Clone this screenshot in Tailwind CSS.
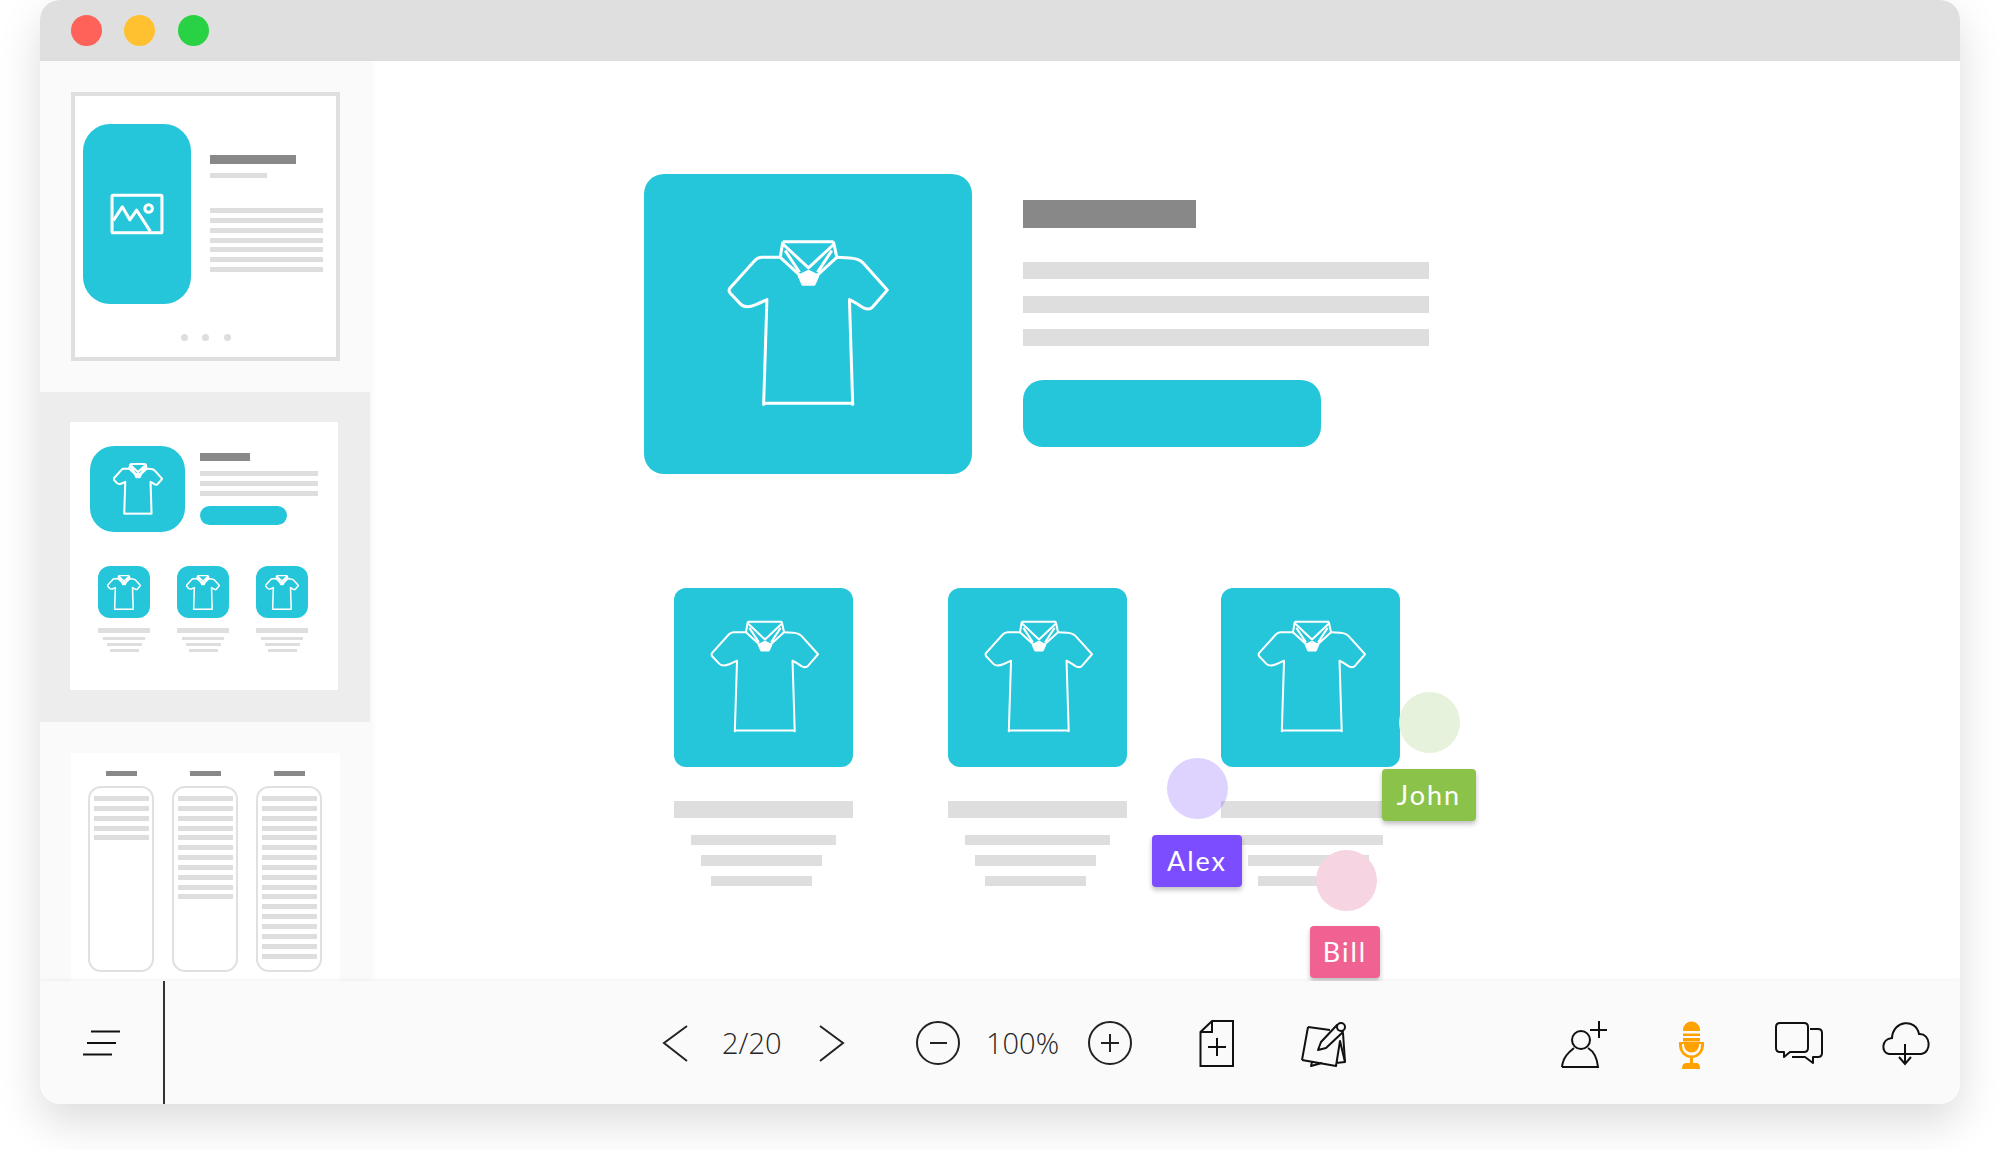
<!DOCTYPE html>
<html lang="en">

<head>
    <meta charset="UTF-8">
    <title>Slides</title>
    <script src="https://cdn.jsdelivr.net/npm/@tailwindcss/browser@4"></script>
</head>

<body class="bg-white w-[2000px] h-[1150px] overflow-hidden pl-[40px]">
    <svg class="hidden">
        <symbol id="shirt" viewBox="290 235 490 505">
            <g fill="none" stroke="white" stroke-linejoin="round">
                <path d="M450 290H395Q382 290 373 300L299 382Q293 390 300 398L330 430Q345 445 375 433Q395 425 410 417L400 736" />
                <path d="M620 290L660 292Q688 294 700 308L772 388L727 440Q718 450 700 442Q675 425 658 417L668 736" />
                <path d="M400 729H668" />
                <path d="M458 243H610M458 243L450 290L510 345M610 243L620 290L560 345M458 250L535 322L612 250M465 270L508 335M605 270L562 335" />
                <path d="M507 346L535 332L563 346L552 371H518Z" fill="white" />
            </g>
        </symbol>
    </svg>

    <div class="w-[1920px] h-[1104px] rounded-[20px] overflow-hidden flex flex-col bg-white shadow-[0_18px_44px_rgba(0,0,0,0.14)]">
        <!-- title bar -->
        <div class="h-[61px] bg-[#dfdfdf] flex items-center gap-[22.8px] pl-[30.7px]">
            <div class="w-[31px] h-[31px] rounded-full bg-[#ff6259]"></div>
            <div class="w-[31px] h-[31px] rounded-full bg-[#ffc130]"></div>
            <div class="w-[31px] h-[31px] rounded-full bg-[#29d244]"></div>
        </div>

        <div class="h-[920px] flex">
            <!-- slide list -->
            <div class="w-[330px] flex flex-col shadow-[2px_0_6px_rgba(0,0,0,0.04)] z-10">
                <div class="h-[331px] bg-[#fafafa] pl-[31px] pt-[31px]">
                    <div class="w-[269px] h-[269px] border-4 border-[#dfdfdf] bg-white pl-[8px] pt-[28px] flex flex-col">
                        <div class="flex gap-[19px]">
                            <div class="w-[108px] h-[180px] rounded-[27px] bg-[#26c6da] flex items-center justify-center">
                                <svg class="w-[54px] h-[42px]" viewBox="332 580 158 122" fill="none" stroke="white" stroke-width="9" stroke-linejoin="round">
                                    <rect x="338" y="586" width="146" height="110" rx="3" />
                                    <path d="M342 660L368 620L390 658L410 630L450 692" />
                                    <circle cx="445" cy="625" r="11" />
                                </svg>
                            </div>
                            <div class="flex flex-col pt-[31px]">
                                <div class="w-[86px] h-[9px] bg-[#888888]"></div>
                                <div class="w-[57px] h-[5px] bg-[#dedede] mt-[9px]"></div>
                                <div class="flex flex-col gap-[4.85px] mt-[30px]">
                                    <div class="w-[113px] h-[5px] bg-[#dedede]"></div>
                                    <div class="w-[113px] h-[5px] bg-[#dedede]"></div>
                                    <div class="w-[113px] h-[5px] bg-[#dedede]"></div>
                                    <div class="w-[113px] h-[5px] bg-[#dedede]"></div>
                                    <div class="w-[113px] h-[5px] bg-[#dedede]"></div>
                                    <div class="w-[113px] h-[5px] bg-[#dedede]"></div>
                                    <div class="w-[113px] h-[5px] bg-[#dedede]"></div>
                                </div>
                            </div>
                        </div>
                        <div class="flex justify-center gap-[14.5px] mt-[30px] -ml-[8px]">
                            <div class="w-[7px] h-[7px] rounded-full bg-[#dedede]"></div>
                            <div class="w-[7px] h-[7px] rounded-full bg-[#dedede]"></div>
                            <div class="w-[7px] h-[7px] rounded-full bg-[#dedede]"></div>
                        </div>
                    </div>
                </div>

                <div class="h-[330px] bg-[#ededed] pl-[30px] pt-[30px]">
                    <div class="w-[268px] h-[268px] bg-white pl-[20px] pt-[24px]">
                        <div class="flex gap-[15px]">
                            <div class="w-[95px] h-[86px] rounded-[24px] bg-[#26c6da] flex items-center justify-center">
                                <svg class="w-[50px] h-[52px]" stroke-width="20"><use href="#shirt" /></svg>
                            </div>
                            <div class="flex flex-col pt-[7px]">
                                <div class="w-[50px] h-[8px] bg-[#888888]"></div>
                                <div class="flex flex-col gap-[4.75px] mt-[10px]">
                                    <div class="w-[118px] h-[5px] bg-[#dedede]"></div>
                                    <div class="w-[118px] h-[5px] bg-[#dedede]"></div>
                                    <div class="w-[118px] h-[5px] bg-[#dedede]"></div>
                                </div>
                                <div class="w-[87px] h-[19px] rounded-[10px] bg-[#26c6da] mt-[10px]"></div>
                            </div>
                        </div>
                        <div class="flex gap-[27px] mt-[34px] ml-[8px]">
                            <div class="flex flex-col items-center w-[52px]">
                                <div class="w-[52px] h-[52px] rounded-[12px] bg-[#26c6da] flex items-center justify-center">
                                    <svg class="w-[34px] h-[35px]" stroke-width="22"><use href="#shirt" /></svg>
                                </div>
                                <div class="w-[52px] h-[5px] bg-[#dedede] mt-[10px]"></div>
                                <div class="w-[42px] h-[3px] bg-[#dedede] mt-[4px]"></div>
                                <div class="w-[35px] h-[3px] bg-[#dedede] mt-[3px]"></div>
                                <div class="w-[29px] h-[3px] bg-[#dedede] mt-[3px]"></div>
                            </div>
                            <div class="flex flex-col items-center w-[52px]">
                                <div class="w-[52px] h-[52px] rounded-[12px] bg-[#26c6da] flex items-center justify-center">
                                    <svg class="w-[34px] h-[35px]" stroke-width="22"><use href="#shirt" /></svg>
                                </div>
                                <div class="w-[52px] h-[5px] bg-[#dedede] mt-[10px]"></div>
                                <div class="w-[42px] h-[3px] bg-[#dedede] mt-[4px]"></div>
                                <div class="w-[35px] h-[3px] bg-[#dedede] mt-[3px]"></div>
                                <div class="w-[29px] h-[3px] bg-[#dedede] mt-[3px]"></div>
                            </div>
                            <div class="flex flex-col items-center w-[52px]">
                                <div class="w-[52px] h-[52px] rounded-[12px] bg-[#26c6da] flex items-center justify-center">
                                    <svg class="w-[34px] h-[35px]" stroke-width="22"><use href="#shirt" /></svg>
                                </div>
                                <div class="w-[52px] h-[5px] bg-[#dedede] mt-[10px]"></div>
                                <div class="w-[42px] h-[3px] bg-[#dedede] mt-[4px]"></div>
                                <div class="w-[35px] h-[3px] bg-[#dedede] mt-[3px]"></div>
                                <div class="w-[29px] h-[3px] bg-[#dedede] mt-[3px]"></div>
                            </div>
                        </div>
                    </div>
                </div>

                <div class="flex-1 bg-[#fafafa] pl-[31px] pt-[31px] flex">
                    <div class="w-[269px] bg-white pl-[17px] pt-[18px] flex gap-[18px]">
                        <div class="flex flex-col items-center">
                            <div class="w-[31px] h-[5px] bg-[#888888]"></div>
                            <div class="w-[66px] h-[186px] mt-[10px] border-2 border-[#e0e0e0] rounded-[13px] pl-[4px] pt-[8px] flex flex-col gap-[4.85px]">
                                <div class="w-[55px] h-[5px] bg-[#dedede]"></div>
                                <div class="w-[55px] h-[5px] bg-[#dedede]"></div>
                                <div class="w-[55px] h-[5px] bg-[#dedede]"></div>
                                <div class="w-[55px] h-[5px] bg-[#dedede]"></div>
                                <div class="w-[55px] h-[5px] bg-[#dedede]"></div>
                            </div>
                        </div>
                        <div class="flex flex-col items-center">
                            <div class="w-[31px] h-[5px] bg-[#888888]"></div>
                            <div class="w-[66px] h-[186px] mt-[10px] border-2 border-[#e0e0e0] rounded-[13px] pl-[4px] pt-[8px] flex flex-col gap-[4.85px]">
                                <div class="w-[55px] h-[5px] bg-[#dedede]"></div>
                                <div class="w-[55px] h-[5px] bg-[#dedede]"></div>
                                <div class="w-[55px] h-[5px] bg-[#dedede]"></div>
                                <div class="w-[55px] h-[5px] bg-[#dedede]"></div>
                                <div class="w-[55px] h-[5px] bg-[#dedede]"></div>
                                <div class="w-[55px] h-[5px] bg-[#dedede]"></div>
                                <div class="w-[55px] h-[5px] bg-[#dedede]"></div>
                                <div class="w-[55px] h-[5px] bg-[#dedede]"></div>
                                <div class="w-[55px] h-[5px] bg-[#dedede]"></div>
                                <div class="w-[55px] h-[5px] bg-[#dedede]"></div>
                                <div class="w-[55px] h-[5px] bg-[#dedede]"></div>
                            </div>
                        </div>
                        <div class="flex flex-col items-center">
                            <div class="w-[31px] h-[5px] bg-[#888888]"></div>
                            <div class="w-[66px] h-[186px] mt-[10px] border-2 border-[#e0e0e0] rounded-[13px] pl-[4px] pt-[8px] flex flex-col gap-[4.85px]">
                                <div class="w-[55px] h-[5px] shrink-0 bg-[#dedede]"></div>
                                <div class="w-[55px] h-[5px] shrink-0 bg-[#dedede]"></div>
                                <div class="w-[55px] h-[5px] shrink-0 bg-[#dedede]"></div>
                                <div class="w-[55px] h-[5px] shrink-0 bg-[#dedede]"></div>
                                <div class="w-[55px] h-[5px] shrink-0 bg-[#dedede]"></div>
                                <div class="w-[55px] h-[5px] shrink-0 bg-[#dedede]"></div>
                                <div class="w-[55px] h-[5px] shrink-0 bg-[#dedede]"></div>
                                <div class="w-[55px] h-[5px] shrink-0 bg-[#dedede]"></div>
                                <div class="w-[55px] h-[5px] shrink-0 bg-[#dedede]"></div>
                                <div class="w-[55px] h-[5px] shrink-0 bg-[#dedede]"></div>
                                <div class="w-[55px] h-[5px] shrink-0 bg-[#dedede]"></div>
                                <div class="w-[55px] h-[5px] shrink-0 bg-[#dedede]"></div>
                                <div class="w-[55px] h-[5px] shrink-0 bg-[#dedede]"></div>
                                <div class="w-[55px] h-[5px] shrink-0 bg-[#dedede]"></div>
                                <div class="w-[55px] h-[5px] shrink-0 bg-[#dedede]"></div>
                                <div class="w-[55px] h-[5px] shrink-0 bg-[#dedede]"></div>
                                <div class="w-[55px] h-[5px] shrink-0 bg-[#dedede]"></div>
                            </div>
                        </div>
                    </div>
                </div>
            </div>

            <!-- canvas -->
            <div class="relative flex-1 bg-white pl-[274px] pt-[113px]">
                <div class="flex gap-[50.5px]">
                    <div class="w-[328px] h-[300px] rounded-[20px] bg-[#26c6da] flex items-center justify-center">
                        <svg class="w-[163px] h-[168px] -mt-[3px]" stroke-width="9"><use href="#shirt" /></svg>
                    </div>
                    <div class="flex flex-col pt-[26px]">
                        <div class="w-[173px] h-[28px] bg-[#888888]"></div>
                        <div class="w-[406px] h-[17px] bg-[#dedede] mt-[34px]"></div>
                        <div class="w-[406px] h-[17px] bg-[#dedede] mt-[16.500px]"></div>
                        <div class="w-[406px] h-[17px] bg-[#dedede] mt-[16.500px]"></div>
                        <div class="w-[298px] h-[67px] rounded-[20px] bg-[#26c6da] mt-[34px]"></div>
                    </div>
                </div>

                <div class="flex gap-[94.5px] mt-[114px] ml-[30px]">
                    <div class="w-[179px] flex flex-col items-center">
                        <div class="w-[179px] h-[179px] rounded-[12px] bg-[#26c6da] flex items-center justify-center">
                            <svg class="w-[110px] h-[113px] ml-[3px] -mt-[3px]" stroke-width="9"><use href="#shirt" /></svg>
                        </div>
                        <div class="w-[179px] h-[17px] bg-[#dedede] mt-[34px]"></div>
                        <div class="w-[145px] h-[10px] bg-[#dedede] mt-[17px]"></div>
                        <div class="w-[121px] h-[11px] bg-[#dedede] mt-[10px] -ml-[4px]"></div>
                        <div class="w-[101px] h-[10px] bg-[#dedede] mt-[10px] -ml-[4px]"></div>
                    </div>
                    <div class="w-[179px] flex flex-col items-center">
                        <div class="w-[179px] h-[179px] rounded-[12px] bg-[#26c6da] flex items-center justify-center">
                            <svg class="w-[110px] h-[113px] ml-[3px] -mt-[3px]" stroke-width="9"><use href="#shirt" /></svg>
                        </div>
                        <div class="w-[179px] h-[17px] bg-[#dedede] mt-[34px]"></div>
                        <div class="w-[145px] h-[10px] bg-[#dedede] mt-[17px]"></div>
                        <div class="w-[121px] h-[11px] bg-[#dedede] mt-[10px] -ml-[4px]"></div>
                        <div class="w-[101px] h-[10px] bg-[#dedede] mt-[10px] -ml-[4px]"></div>
                    </div>
                    <div class="w-[179px] flex flex-col items-center">
                        <div class="w-[179px] h-[179px] rounded-[12px] bg-[#26c6da] flex items-center justify-center">
                            <svg class="w-[110px] h-[113px] ml-[3px] -mt-[3px]" stroke-width="9"><use href="#shirt" /></svg>
                        </div>
                        <div class="w-[179px] h-[17px] bg-[#dedede] mt-[34px]"></div>
                        <div class="w-[145px] h-[10px] bg-[#dedede] mt-[17px]"></div>
                        <div class="w-[121px] h-[11px] bg-[#dedede] mt-[10px] -ml-[4px]"></div>
                        <div class="w-[101px] h-[10px] bg-[#dedede] mt-[10px] -ml-[4px]"></div>
                    </div>
                </div>

                <!-- collaborator cursors -->
                <div class="absolute left-[1029px] top-[631px] w-[61px] h-[61px] rounded-full bg-[#e6f2dc]"></div>
                <div class="absolute left-[797px] top-[697px] w-[61px] h-[61px] rounded-full bg-[#7c4dff]/25"></div>
                <div class="absolute left-[946px] top-[789px] w-[61px] h-[61px] rounded-full bg-[#f6d4e1]"></div>
                <div class="absolute left-[1012px] top-[708px] w-[94px] h-[52px] rounded-[4px] bg-[#8bc34a] text-white text-[27px] tracking-[2px] flex items-center justify-center font-['Lato',sans-serif] shadow-[0_3px_5px_rgba(0,0,0,0.25)]">John</div>
                <div class="absolute left-[782px] top-[774px] w-[90px] h-[52px] rounded-[4px] bg-[#7c4dff] text-white text-[27px] tracking-[2px] flex items-center justify-center font-['Lato',sans-serif] shadow-[0_3px_5px_rgba(0,0,0,0.25)]">Alex</div>
                <div class="absolute left-[940px] top-[865px] w-[70px] h-[52px] rounded-[4px] bg-[#f06292] text-white text-[27px] tracking-[2px] flex items-center justify-center font-['Lato',sans-serif] shadow-[0_3px_5px_rgba(0,0,0,0.25)]">Bill</div>
            </div>
        </div>

        <!-- toolbar -->
        <div class="relative z-20 h-[123px] bg-[#fafafa] flex items-center shadow-[0_-1px_4px_rgba(0,0,0,0.06)] text-[#262626] text-[29px] font-light font-['Open_Sans',sans-serif]">
            <div class="w-[123px] flex justify-center">
                <svg class="w-[40px] h-[30px]" viewBox="82 1027 40 30" fill="none" stroke="#111" stroke-width="2">
                    <path d="M91 1030.5H120M87 1042H116M83 1053.5H112" />
                </svg>
            </div>
            <div class="w-[2px] self-stretch bg-[#333333]"></div>

            <svg class="w-[26px] h-[52px] ml-[497px]" viewBox="662 1016 26 52" fill="none" stroke="#222" stroke-width="2"><path d="M687 1025L664 1042L687 1060" /></svg>
            <div class="w-[60px] ml-[34px] whitespace-nowrap">2/20</div>
            <svg class="w-[26px] h-[52px] ml-[37px]" viewBox="819 1016 26 52" fill="none" stroke="#222" stroke-width="2"><path d="M820 1025L843 1042L820 1060" /></svg>

            <svg class="w-[44px] h-[52px] ml-[71px]" viewBox="916 1016 44 52" fill="none" stroke="#222" stroke-width="2"><circle cx="938" cy="1042" r="21" /><path d="M930 1042H947" /></svg>
            <div class="w-[72px] ml-[26px] whitespace-nowrap">100%</div>
            <svg class="w-[44px] h-[52px] ml-[29.5px]" viewBox="1086 1016 44 52" fill="none" stroke="#222" stroke-width="2"><circle cx="1108" cy="1042" r="21" /><path d="M1099 1042H1117M1108 1033V1051" /></svg>

            <svg class="w-[36px] h-[52px] ml-[66.5px]" viewBox="1198 1016 36 52" fill="none" stroke="#111" stroke-width="2"><path d="M1212 1020H1233V1065H1200.5V1031Z" /><path d="M1212 1020V1031H1200.5" /><path d="M1208 1046H1226M1217 1037V1055" /></svg>
            <svg class="w-[50px] h-[52px] ml-[64px]" viewBox="1298 1016 50 52" fill="none" stroke="#111" stroke-width="2" stroke-linejoin="round">
                <path d="M1308 1026L1330 1029M1302 1059L1336 1065L1340 1040L1345 1061L1336 1062M1322 1062L1311 1065L1312 1061" />
                <path d="M1308 1026L1302 1059M1343 1032L1345 1061" />
                <path d="M1318 1049L1321 1041L1337 1024L1343 1031L1326 1047Z" fill="#fafafa" />
                <circle cx="1341" cy="1026" r="4" fill="#fafafa" />
            </svg>

            <svg class="w-[50px] h-[52px] ml-[209px]" viewBox="1557 1016 50 52" fill="none" stroke="#111" stroke-width="2"><circle cx="1581" cy="1039" r="9" /><path d="M1562 1066C1563 1056 1569 1051 1574 1047M1588 1047C1593 1050 1597 1056 1598 1066H1562" /><path d="M1590 1029H1607M1599 1020V1037" /></svg>

            <svg class="w-[29px] h-[52px] ml-[70px]" viewBox="1677 1016 29 52" fill="#ffa200">
                <path d="M1683 1030V1029A8.500 8.500 0 0 1 1700 1029V1030H1683ZM1683 1032.500H1700V1035H1683ZM1683 1037H1700V1040.500H1683Z" />
                <path d="M1679 1041H1704V1045A12.500 12.500 0 0 1 1693 1057V1062H1697Q1700 1062 1700 1068H1682Q1682 1062 1686 1062H1690V1057A12.500 12.500 0 0 1 1679 1045Z" />
                <path d="M1682 1043H1701V1045A9.500 9.500 0 0 1 1682 1045Z" fill="#fafafa" />
                <path d="M1684 1041H1699V1044A7.500 7.500 0 0 1 1684 1044Z" />
            </svg>

            <svg class="w-[50px] h-[52px] ml-[68px]" viewBox="1774 1016 50 52" fill="none" stroke="#111" stroke-width="2" stroke-linejoin="round"><path d="M1780 1022H1804Q1808 1022 1808 1026V1047Q1808 1051 1804 1051H1790L1784 1056V1051H1780Q1776 1051 1776 1047V1026Q1776 1022 1780 1022Z" /><path d="M1810 1028H1818Q1822 1028 1822 1032V1052Q1822 1056 1818 1056H1813V1062L1805 1056H1792" /></svg>

            <svg class="w-[50px] h-[52px] ml-[57px]" viewBox="1881 1016 50 52" fill="none" stroke="#111" stroke-width="2"><path d="M1893 1053H1889C1881 1052 1881 1038 1892 1037C1893 1019 1916 1017 1919 1033C1931 1032 1932 1052 1921 1053H1893" /><path d="M1905 1043V1062M1899 1056L1905 1063L1911 1056" /></svg>
        </div>
    </div>
</body>

</html>
